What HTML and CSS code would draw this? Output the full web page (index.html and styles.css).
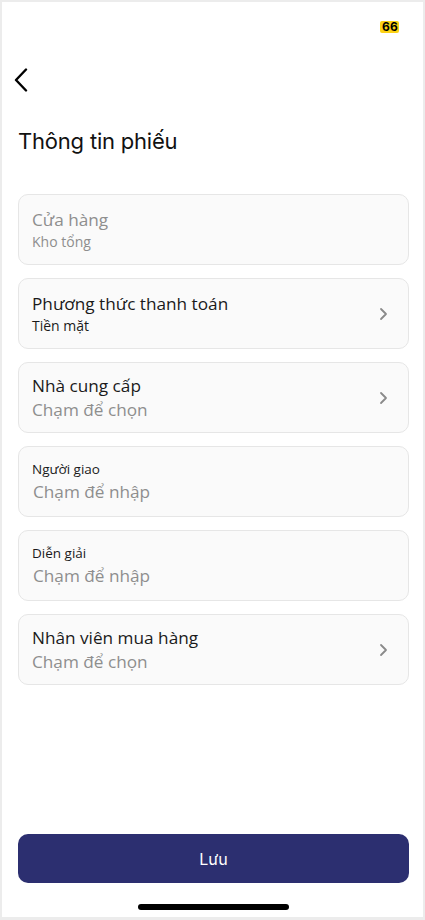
FILE: index.html
```html
<!DOCTYPE html>
<html lang="vi">
<head>
<meta charset="utf-8">
<title>Thông tin phiếu</title>
<link rel="stylesheet" href="styles.css">
</head>
<body>
<div class="screen">
  <div class="status">
    <span class="badge">66</span>
  </div>
  <div class="nav">
    <svg class="back" width="14" height="24" viewBox="0 0 14 24" aria-hidden="true">
      <path d="M12 1.5 L2 12 L12 22.5" fill="none" stroke="#000" stroke-width="2.4" stroke-linecap="round" stroke-linejoin="round"/>
    </svg>
  </div>
  <h1 class="title">Thông tin phiếu</h1>
  <div class="list">
    <div class="card">
      <div class="texts">
        <div class="main muted">Cửa hàng</div>
        <div class="sub muted">Kho tổng</div>
      </div>
    </div>
    <div class="card">
      <div class="texts">
        <div class="main">Phương thức thanh toán</div>
        <div class="sub">Tiền mặt</div>
      </div>
      <svg class="chev" width="9" height="14" viewBox="0 0 9 14" aria-hidden="true"><path d="M2 2 L7 7 L2 12" fill="none" stroke="#8a8a8a" stroke-width="1.8" stroke-linecap="round" stroke-linejoin="round"/></svg>
    </div>
    <div class="card">
      <div class="texts">
        <div class="main">Nhà cung cấp</div>
        <div class="main muted">Chạm để chọn</div>
      </div>
      <svg class="chev" width="9" height="14" viewBox="0 0 9 14" aria-hidden="true"><path d="M2 2 L7 7 L2 12" fill="none" stroke="#8a8a8a" stroke-width="1.8" stroke-linecap="round" stroke-linejoin="round"/></svg>
    </div>
    <div class="card">
      <div class="texts">
        <div class="label">Người giao</div>
        <div class="main muted input">Chạm để nhập</div>
      </div>
    </div>
    <div class="card">
      <div class="texts">
        <div class="label">Diễn giải</div>
        <div class="main muted input">Chạm để nhập</div>
      </div>
    </div>
    <div class="card">
      <div class="texts">
        <div class="main">Nhân viên mua hàng</div>
        <div class="main muted">Chạm để chọn</div>
      </div>
      <svg class="chev" width="9" height="14" viewBox="0 0 9 14" aria-hidden="true"><path d="M2 2 L7 7 L2 12" fill="none" stroke="#8a8a8a" stroke-width="1.8" stroke-linecap="round" stroke-linejoin="round"/></svg>
    </div>
  </div>
  <div class="footer">
    <button class="save">Lưu</button>
    <div class="home"></div>
  </div>
</div>
</body>
</html>
```

FILE: styles.css
```css
* { box-sizing: border-box; }
html, body { margin: 0; padding: 0; }
body {
  background: #ececec;
  width: 425px;
  height: 920px;
  padding: 2px 2px 3px 2px;
  font-family: "Open Sans", "Noto Sans", sans-serif;
}
.screen {
  background: #fff;
  height: 915px;
  display: flex;
  flex-direction: column;
  padding: 0 14px 0 16px;
}
.status {
  height: 55px;
  display: flex;
  justify-content: flex-end;
  align-items: flex-start;
  padding-top: 19px;
  padding-right: 10px;
}
.badge {
  background: #fcd215;
  color: #000;
  font-family: Inter, "Liberation Sans", sans-serif;
  font-weight: 700;
  font-size: 12px;
  line-height: 12px;
  height: 12px;
  padding: 0 1px 0 2px;
  border-radius: 2px;
  letter-spacing: 0.2px;
}
.nav {
  height: 44px;
  display: flex;
  align-items: center;
}
.back { display: block; margin-top: 2px; margin-left: -4px; }
.title {
  margin: 0;
  padding-top: 26px;
  font-family: Inter, "Liberation Sans", sans-serif;
  font-weight: 400;
  font-size: 22px;
  line-height: 28px;
  color: #111;
  letter-spacing: -0.2px;
}
.list {
  margin-top: 39px;
  display: flex;
  flex-direction: column;
  gap: 13px;
}
.card {
  height: 71px;
  background: #fafafa;
  border: 1px solid #e6e6e6;
  border-radius: 10px;
  display: flex;
  align-items: center;
  padding: 0 20px 0 13px;
}
.texts { flex: 1; display: flex; flex-direction: column; }
.main {
  font-size: 17.2px;
  line-height: 24px;
  color: #1a1a1a;
}
.sub {
  font-size: 14px;
  line-height: 20px;
  color: #1a1a1a;
}
.label {
  font-size: 13.5px;
  line-height: 20px;
  color: #1a1a1a;
  margin-bottom: 1px;
}
.input { padding-left: 1px; }
.muted { color: #8e8e8e; }
.chev { display: block; flex: none; }
.footer {
  margin-top: auto;
  display: flex;
  flex-direction: column;
  align-items: center;
}
.save {
  width: 100%;
  height: 49px;
  border: none;
  border-radius: 10px;
  background: #2c2f70;
  color: #fff;
  font-family: Inter, "Liberation Sans", sans-serif;
  font-size: 16px;
  padding: 0;
}
.home {
  width: 151px;
  height: 6px;
  border-radius: 3px;
  background: #000;
  margin-top: 21px;
  margin-bottom: 7px;
  margin-left: -1px;
}
```
